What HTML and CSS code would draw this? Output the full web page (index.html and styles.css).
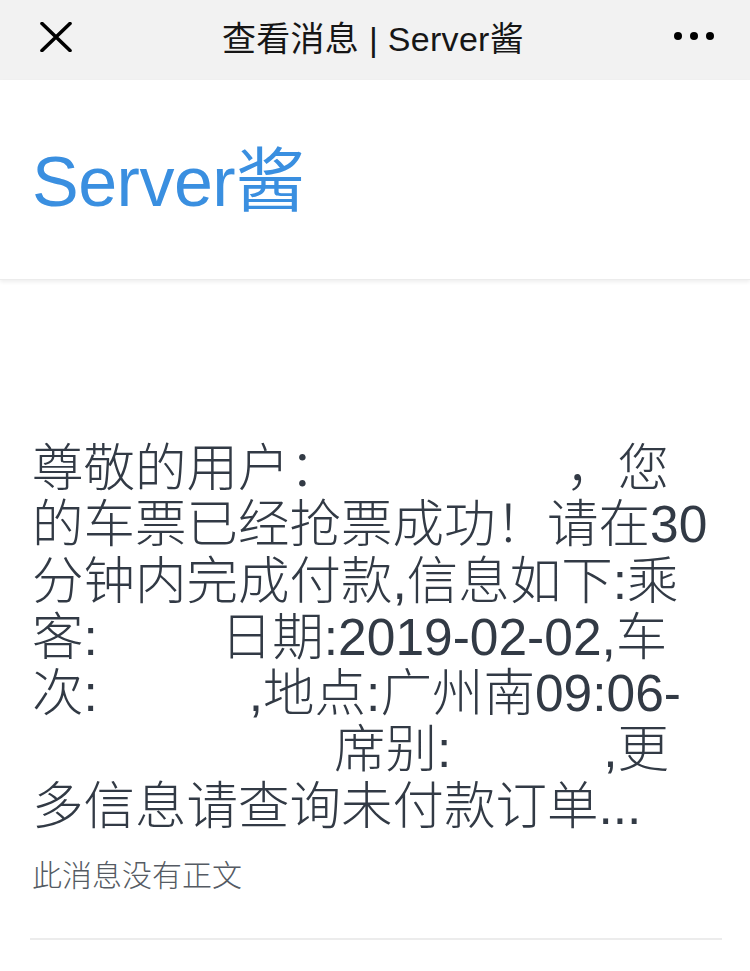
FILE: index.html
```html
<!DOCTYPE html>
<html lang="zh-CN">
<head>
<meta charset="utf-8">
<title>查看消息 | Server酱</title>
<link rel="stylesheet" href="styles.css">
</head>
<body>
<div class="navbar">
  <svg class="nav-close" width="32" height="30" viewBox="0 0 32 30">
    <path d="M2 1.5 L30 28.5 M30 1.5 L2 28.5" stroke="#000" stroke-width="3.6" stroke-linecap="round" fill="none"/>
  </svg>
  <div class="nav-title">查看消息 | Server酱</div>
  <div class="nav-more"><span class="dot"></span><span class="dot"></span><span class="dot"></span></div>
</div>
<header class="brand">
  <h1 class="brand-name">Server酱</h1>
</header>
<main class="message">
  <div class="msg-title">
    <div class="line">尊敬的用户：<span class="redact w225"></span>，您</div>
    <div class="line">的车票已经抢票成功！请在30</div>
    <div class="line">分钟内完成付款,信息如下:乘</div>
    <div class="line">客:<span class="redact w123"></span>日期:2019-02-02,车</div>
    <div class="line">次:<span class="redact w151"></span>,地点:广州南09:06-</div>
    <div class="line"><span class="redact w302"></span>席别:<span class="redact w152"></span>,更</div>
    <div class="line">多信息请查询未付款订单...</div>
  </div>
  <p class="msg-note">此消息没有正文</p>
  <hr class="divider">
</main>
</body>
</html>
```
FILE: styles.css
```css
* { box-sizing: border-box; }
html, body { margin: 0; padding: 0; background: #fff; }
body {
  font-family: "Liberation Sans", "Noto Sans CJK SC", sans-serif;
  width: 750px;
  overflow: hidden;
}
.navbar {
  height: 80px;
  background: #f2f2f2;
  display: flex;
  align-items: center;
  position: relative;
  padding: 0 36px 0 40px;
}
.nav-close { display: block; margin-top: -6px; }
.nav-title {
  flex: 1;
  text-align: center;
  font-size: 34px;
  color: #161616;
  margin-top: -8px;
  letter-spacing: 0.3px;
}
.nav-more {
  display: flex;
  gap: 8px;
  margin-top: -8px;
}
.dot {
  width: 8px;
  height: 8px;
  border-radius: 50%;
  background: #000;
}
.brand {
  height: 200px;
  background: #fff;
  padding: 0 32px;
  box-shadow: 0 2px 4px rgba(0,0,0,0.07);
  border-bottom: 1px solid #ececec;
  position: relative;
}
.brand-name {
  margin: 0;
  padding-top: 57px;
  font-weight: normal;
  font-size: 70px;
  line-height: 90px;
  color: #3a8fe0;
  letter-spacing: -0.5px;
}
.message { padding: 0 30px 0 32px; }
.msg-title {
  margin-top: 160px;
  font-size: 51.5px;
  line-height: 56.3px;
  color: #323a45;
  font-weight: 300;
}
.line { white-space: nowrap; }
.redact { display: inline-block; height: 1px; }
.w225 { width: 225px; }
.w123 { width: 123px; }
.w151 { width: 151px; }
.w302 { width: 302px; }
.w152 { width: 152px; }
.msg-note {
  margin: 22px 0 0;
  font-size: 30px;
  line-height: 40px;
  color: #555b63;
  font-weight: 300;
}
.divider {
  margin: 42px 0 0 -2px;
  border: 0;
  height: 2px;
  background: #ececec;
  width: 692px;
}
```
